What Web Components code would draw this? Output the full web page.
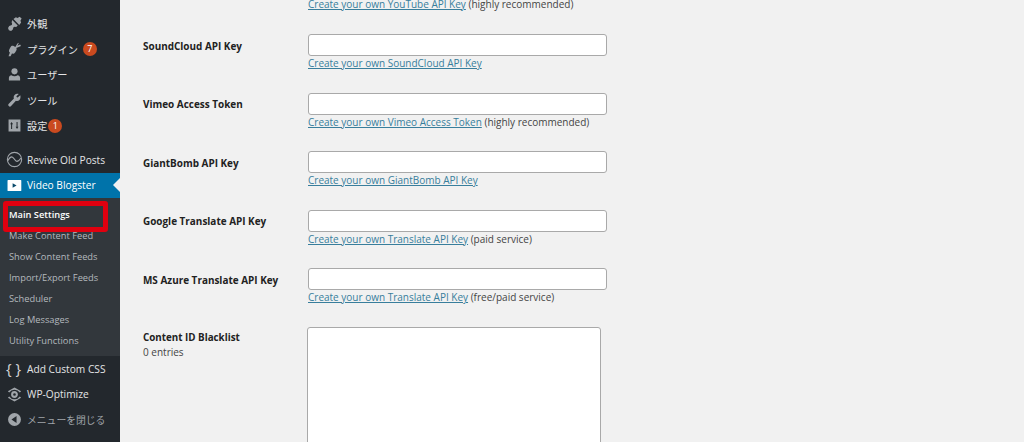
<!DOCTYPE html>
<html lang="ja">
<head>
<meta charset="utf-8">
<title>Video Blogster Settings</title>
<style>
    html, body { margin: 0; height: 442px; overflow: hidden; background: #f1f1f1; }
    body { font-family: "Open Sans", "Noto Sans CJK JP", sans-serif; }
</style>
</head>
<body>
<wp-admin-page>
    <wp-side-menu slot="menu">
        <wp-menu-item icon="brush">外観</wp-menu-item>
        <wp-menu-item icon="plugin" badge="7">プラグイン</wp-menu-item>
        <wp-menu-item icon="user">ユーザー</wp-menu-item>
        <wp-menu-item icon="wrench">ツール</wp-menu-item>
        <wp-menu-item icon="settings" badge="1" tight>設定</wp-menu-item>
        <wp-menu-gap></wp-menu-gap>
        <wp-menu-item icon="revive">Revive Old Posts</wp-menu-item>
        <wp-menu-item icon="video" current>Video Blogster</wp-menu-item>
        <wp-sub-menu>
            <wp-sub-item current marked>Main Settings</wp-sub-item>
            <wp-sub-item>Make Content Feed</wp-sub-item>
            <wp-sub-item>Show Content Feeds</wp-sub-item>
            <wp-sub-item>Import/Export Feeds</wp-sub-item>
            <wp-sub-item>Scheduler</wp-sub-item>
            <wp-sub-item>Log Messages</wp-sub-item>
            <wp-sub-item>Utility Functions</wp-sub-item>
        </wp-sub-menu>
        <wp-menu-item icon="braces">Add Custom CSS</wp-menu-item>
        <wp-menu-item icon="optimize">WP-Optimize</wp-menu-item>
        <wp-menu-item icon="collapse" dim>メニューを閉じる</wp-menu-item>
    </wp-side-menu>

    <wp-field first link="Create your own YouTube API Key" note="(highly recommended)"></wp-field>
    <wp-field label="SoundCloud API Key" link="Create your own SoundCloud API Key"></wp-field>
    <wp-field label="Vimeo Access Token" link="Create your own Vimeo Access Token" note="(highly recommended)"></wp-field>
    <wp-field label="GiantBomb API Key" link="Create your own GiantBomb API Key"></wp-field>
    <wp-field label="Google Translate API Key" link="Create your own Translate API Key" note="(paid service)"></wp-field>
    <wp-field label="MS Azure Translate API Key" link="Create your own Translate API Key" note="(free/paid service)"></wp-field>
    <wp-blacklist label="Content ID Blacklist" count="0 entries"></wp-blacklist>
</wp-admin-page>

<script>
const ICONS = {
    brush: '<path d="M8.800 4.600 11.600 2.600l2 .8 2.400-1.400 2.400 2.200-1.400 2.600.8 2-2.200 3zM7.400 6 13.800 12.400 12 14.200l-2-.4-1.200.6-.8 2.800-2 1.600-2.600-.8-1-2.600 1.400-2.600 3-1 .4-1.400-.6-2z"/>',
    plugin: '<path d="M13.400 3 11 7 9 6C7.400 5.200 6.200 5.800 5.400 7.200L4 9.600c-.8 1.500-.7 2.900.6 4L3 17.800h2.400l1.600-3c1.500.5 2.800 0 3.700-1.400l1.400-2.300c.6-1 .7-2-.1-2.800l3-1.300 2.600-1.200-1-1.800-3.200 1.500 1.900-3.300z"/>',
    user: '<circle cx="10" cy="6.300" r="3.600"/><path d="M3.400 17v-3c0-1.900 1.400-3 3-3.200 1 .9 2.200 1.300 3.600 1.300s2.600-.4 3.600-1.300c1.700.2 3 1.300 3 3.200v3z"/>',
    wrench: '<path d="M16.800 3.900 13.700 6.600l-1-.3-.5-1.300 2.800-2.600c-1.900-.6-3.700-.2-4.900 1-1 1.100-1.300 2.600-.8 4.100L3.300 13.800c-.9.900-.9 2 0 2.800.8.900 1.900.8 2.700 0l5.700-6.200c1.500.5 3 .1 4.100-.9 1.200-1.200 1.600-3.600 1-5.600z"/>',
    settings: '<path fill-rule="evenodd" d="M3 3h14v14H3zM6.600 6 4.900 8.400h1.100V14h1.200V8.400h1.100zM12.400 6v5.600h-1.100l1.700 2.400 1.700-2.400h-1.100V6z"/>',
    revive: '<circle cx="10" cy="10" r="8.400" fill="none" stroke="currentColor" stroke-width="1.300"/><path d="M2 11.400c1.600-3 3.200-4.600 4.800-4.600 2.300 0 3.600 5.400 6 5.400 1.400 0 3-1.300 4.900-4" fill="none" stroke="currentColor" stroke-width="1.400"/>',
    video: '<path fill="#fff" d="M2.600 3.400h14.600a.8.8 0 0 1 .8.8v11.600a.8.8 0 0 1-.8.8H2.600a.8.8 0 0 1-.8-.8V4.200a.8.8 0 0 1 .8-.8z"/><path fill="#0a4a6b" d="M7.800 7.400v5.200l4.600-2.600z"/>',
    optimize: '<path d="M10 1.800 2.200 6.300l1.600 1.300A7.200 7.200 0 0 1 10 4.400a7.200 7.200 0 0 1 6.200 3.200l1.600-1.300zM10 18.200l7.800-4.500-1.600-1.300a7.200 7.200 0 0 1-6.200 3.200 7.200 7.200 0 0 1-6.200-3.200l-1.600 1.300z"/><circle cx="10" cy="10" r="2.800" fill="none" stroke="currentColor" stroke-width="2.400"/>',
    collapse: '<path fill-rule="evenodd" d="M10 2.400a7.600 7.600 0 1 1 0 15.200 7.600 7.600 0 0 1 0-15.200zM12.400 6l-6 4 6 4z"/>'
};

class WpAdminPage extends HTMLElement {
    connectedCallback() {
        this.attachShadow({ mode: 'open' }).innerHTML = `
        <style>
            :host { display: flex; height: 442px; overflow: hidden; }
            .menu { flex: none; width: 120px; display: block; }
            main { flex: 1; min-width: 0; padding-left: 23px; }
        </style>
        <div class="menu"><slot name="menu"></slot></div>
        <main><slot></slot></main>`;
    }
}

class WpSideMenu extends HTMLElement {
    connectedCallback() {
        this.attachShadow({ mode: 'open' }).innerHTML = `
        <style>
            :host {
                display: block;
                height: 442px;
                box-sizing: border-box;
                padding-top: 11px;
                background: #23282d;
            }
        </style>
        <slot></slot>`;
    }
}

class WpMenuGap extends HTMLElement {
    connectedCallback() {
        this.attachShadow({ mode: 'open' }).innerHTML = `<style>:host { display: block; height: 8.5px; }</style>`;
    }
}

class WpMenuItem extends HTMLElement {
    connectedCallback() {
        const icon = this.getAttribute('icon');
        const badge = this.getAttribute('badge');
        const graphic = icon === 'braces'
            ? '<span class="braces">{ }</span>'
            : `<svg viewBox="0 0 20 20" width="17" height="17" fill="currentColor">${ICONS[icon]}</svg>`;
        this.attachShadow({ mode: 'open' }).innerHTML = `
        <style>
            :host {
                display: flex;
                align-items: center;
                position: relative;
                height: 25.5px;
                padding-left: 6px;
                font-size: 10.2px;
                color: #e4e5e6;
            }
            :host([current]) { background: #0073aa; color: #fff; }
            :host([dim]) { color: #a0a5aa; font-size: 9.8px; }
            .icon { flex: none; width: 21px; display: flex; align-items: center; color: #a0a5aa; }
            :host([current]) .icon { color: #fff; }
            .braces { font-size: 15px; line-height: 1; color: #d5d7d9; }
            .badge {
                width: 14px;
                height: 14px;
                margin-left: 5px;
                border-radius: 50%;
                background: #ca4a1f;
                color: #fff;
                font-size: 9px;
                line-height: 14px;
                text-align: center;
            }
            :host([tight]) .badge { margin-left: 1px; }
            .arrow {
                display: none;
                position: absolute;
                right: 0;
                top: 50%;
                margin-top: -7px;
                border: 7px solid transparent;
                border-right-color: #f1f1f1;
                border-left-width: 0;
            }
            :host([current]) .arrow { display: block; }
        </style>
        <span class="icon">${graphic}</span>
        <slot></slot>
        ${badge ? `<span class="badge">${badge}</span>` : ''}
        <span class="arrow"></span>`;
    }
}

class WpSubMenu extends HTMLElement {
    connectedCallback() {
        this.attachShadow({ mode: 'open' }).innerHTML = `
        <style>
            :host {
                display: block;
                padding: 6px 0 5px;
                background: #32373c;
            }
        </style>
        <slot></slot>`;
    }
}

class WpSubItem extends HTMLElement {
    connectedCallback() {
        this.attachShadow({ mode: 'open' }).innerHTML = `
        <style>
            :host {
                display: flex;
                align-items: center;
                position: relative;
                height: 21px;
                padding-left: 9px;
                font-size: 9.3px;
                color: #b4b9be;
            }
            :host([current]) { color: #fff; font-weight: 600; }
            .mark {
                display: none;
                position: absolute;
                left: 3px;
                top: -3px;
                width: 105px;
                height: 31px;
                box-sizing: border-box;
                border: 5.5px solid #e0000f;
                border-radius: 3px;
            }
            :host([marked]) .mark { display: block; }
        </style>
        <slot></slot>
        <span class="mark"></span>`;
    }
}

class WpField extends HTMLElement {
    connectedCallback() {
        const label = this.getAttribute('label') || '';
        const note = this.getAttribute('note');
        this.attachShadow({ mode: 'open' }).innerHTML = `
        <style>
            :host {
                display: grid;
                grid-template-columns: 165px 299px;
                height: 58.5px;
                font-size: 10px;
                color: #444;
            }
            :host([first]) { height: 37.5px; margin-top: -3.5px; }
            .label { padding-top: 4.5px; font-size: 9.95px; font-weight: 700; color: #222; line-height: 14px; }
            input {
                display: block;
                width: 299px;
                height: 22px;
                box-sizing: border-box;
                margin: 0;
                border: 1px solid #a9a9a9;
                border-radius: 3px;
                background: #fff;
            }
            :host([first]) input { display: none; }
            .help { line-height: 14px; white-space: nowrap; }
            a { color: #387e9c; text-decoration: underline; }
        </style>
        <div class="label">${label}</div>
        <div>
            <input type="text">
            <div class="help"><a href="#">${this.getAttribute('link')}</a>${note ? ' ' + note : ''}</div>
        </div>`;
    }
}

class WpBlacklist extends HTMLElement {
    connectedCallback() {
        this.attachShadow({ mode: 'open' }).innerHTML = `
        <style>
            :host {
                display: grid;
                grid-template-columns: 164px 294px;
                font-size: 10px;
                color: #444;
            }
            .label { padding-top: 4.5px; line-height: 14px; }
            b { display: block; font-size: 9.8px; font-weight: 700; color: #222; }
            .box {
                height: 160px;
                box-sizing: border-box;
                border: 1px solid #a9a9a9;
                border-radius: 3px;
                background: #fff;
            }
        </style>
        <div class="label"><b>${this.getAttribute('label')}</b>${this.getAttribute('count')}</div>
        <div class="box"></div>`;
    }
}

customElements.define('wp-admin-page', WpAdminPage);
customElements.define('wp-side-menu', WpSideMenu);
customElements.define('wp-menu-gap', WpMenuGap);
customElements.define('wp-menu-item', WpMenuItem);
customElements.define('wp-sub-menu', WpSubMenu);
customElements.define('wp-sub-item', WpSubItem);
customElements.define('wp-field', WpField);
customElements.define('wp-blacklist', WpBlacklist);
</script>
</body>
</html>
